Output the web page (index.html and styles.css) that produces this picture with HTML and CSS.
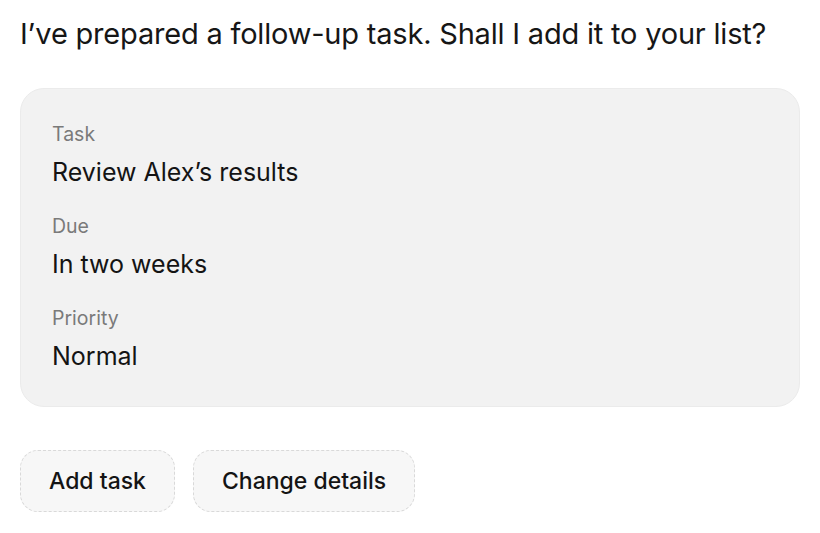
FILE: index.html
```html
<!DOCTYPE html>
<html lang="en">
<head>
    <meta charset="UTF-8">
    <meta name="viewport" content="width=device-width, initial-scale=1.0">
    <title>Follow-up task</title>
    <link rel="stylesheet" href="styles.css">
</head>
<body>
    <div class="message">
        <p class="prompt">I’ve prepared a follow-up task. Shall I add it to your list?</p>

        <div class="task-card">
            <div class="field">
                <div class="label">Task</div>
                <div class="value">Review Alex’s results</div>
            </div>
            <div class="field">
                <div class="label">Due</div>
                <div class="value">In two weeks</div>
            </div>
            <div class="field">
                <div class="label">Priority</div>
                <div class="value">Normal</div>
            </div>
        </div>

        <div class="actions">
            <button class="button">Add task</button>
            <button class="button">Change details</button>
        </div>
    </div>
</body>
</html>
```

FILE: styles.css
```css
/* base */
body {
    margin: 0;
    padding: 0;
    background: #ffffff;
    color: #111111;
    font-family: 'Inter', 'Liberation Sans', sans-serif;
}

.message {
    padding: 16px 20px 0 20px;
}

.prompt {
    margin: 0 0 36px 0;
    font-size: 29px;
    line-height: 36px;
    letter-spacing: -0.2px;
    color: #161616;
}

.task-card {
    background-color: #f2f2f2;
    border: 1px solid #ebebeb;
    border-radius: 24px;
    padding: 33px 32px 34px 31px;
    display: flex;
    flex-direction: column;
    gap: 26px;
}

.label {
    font-size: 19.5px;
    line-height: 24px;
    color: #7a7a7a;
}

.value {
    margin-top: 10px;
    font-size: 25px;
    line-height: 32px;
    color: #141414;
}

.actions {
    display: flex;
    gap: 18px;
    margin-top: 43px;
}

.button {
    font-family: inherit;
    font-size: 23px;
    font-weight: 500;
    color: #141414;
    background-color: #f7f7f7;
    border: 1.5px dashed #d9d9d9;
    border-radius: 18px;
    padding: 0 28px;
    height: 62px;
    cursor: pointer;
}
```
